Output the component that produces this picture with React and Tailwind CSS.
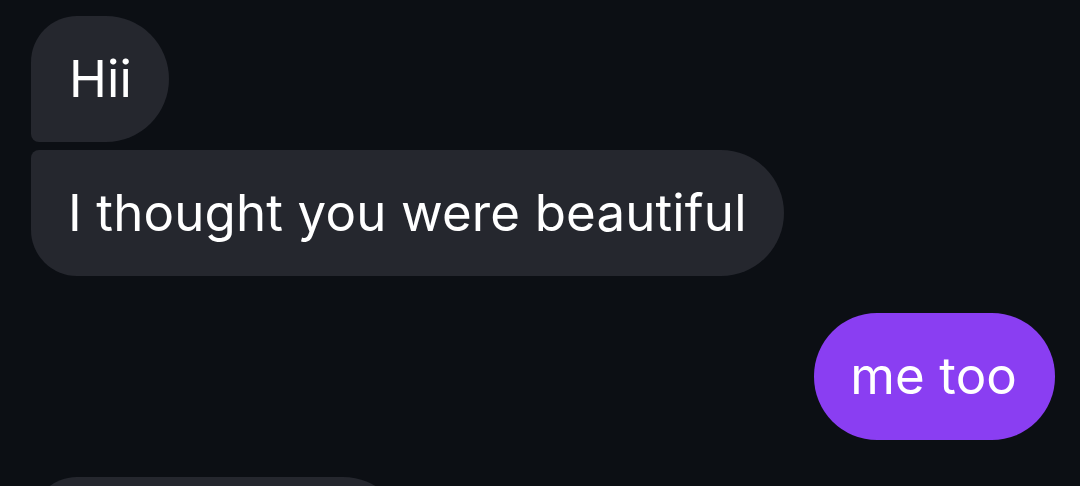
export default function App() {
  return (
    <div
      className="bg-[#0c0f14] w-[1080px] h-[486px] overflow-hidden flex flex-col pt-[16px] pl-[31px] pr-[25px]"
      style={{ fontFamily: 'Inter, "Liberation Sans", sans-serif' }}
    >
      {/* incoming group */}
      <div className="flex flex-col items-start gap-[8px]">
        <div className="h-[126px] flex items-center bg-[#25272e] text-white text-[51px] tracking-[0.1px] pl-[38px] pr-[37px] rounded-tl-[46px] rounded-tr-[63px] rounded-br-[63px] rounded-bl-[8px]">
          Hii
        </div>
        <div className="h-[126px] flex items-center bg-[#25272e] text-white text-[51px] tracking-[0.15px] pl-[37px] pr-[37px] rounded-tl-[8px] rounded-bl-[46px] rounded-tr-[63px] rounded-br-[63px]">
          I thought you were beautiful
        </div>
      </div>

      {/* outgoing */}
      <div className="flex justify-end mt-[37px]">
        <div className="h-[127px] flex items-center bg-[#8a3ef2] text-white text-[51px] tracking-[0.1px] pl-[36px] pr-[38px] rounded-[63px]">
          me too
        </div>
      </div>

      {/* next incoming, cut off */}
      <div className="flex mt-[37px]">
        <div className="h-[126px] w-[375px] bg-[#25272e] rounded-tl-[46px] rounded-tr-[63px]" />
      </div>
    </div>
  )
}
